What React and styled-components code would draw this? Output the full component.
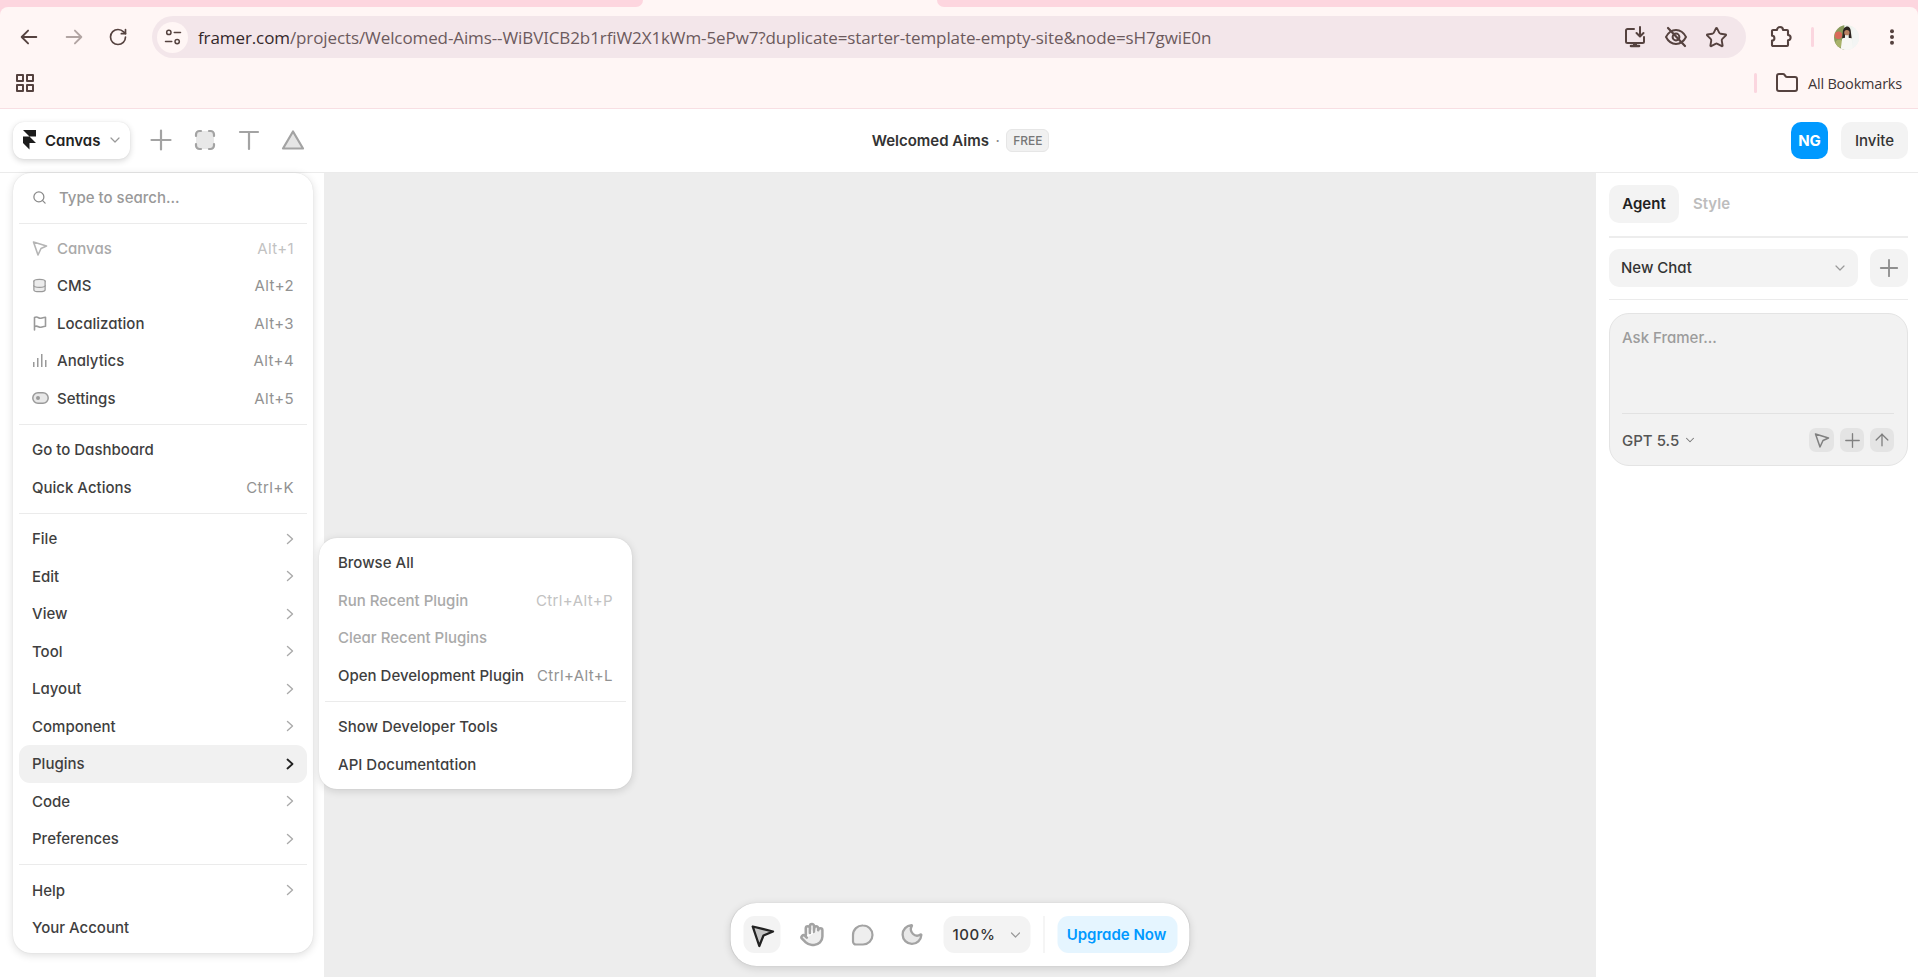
import React from 'react'
import styled, { createGlobalStyle } from 'styled-components'
import { RotateCw, Star, Folder, Database, Hand, Moon, Search, Plus, ChevronDown, ArrowUp } from 'lucide-react'

const GlobalStyle = createGlobalStyle`
  html, body {
    margin: 0;
    padding: 0;
    background: #fff;
    overflow: hidden;
  }
  * { box-sizing: border-box; }
  body {
    font-family: Inter, "Liberation Sans", sans-serif;
    font-feature-settings: "cv11", "ss03";
  }
`

const Page = styled.div`
  width: 1918px;
  height: 977px;
  display: flex;
  flex-direction: column;
  background: #fff;
`

/* browser chrome */
const Browser = styled.div`
  height: 109px;
  flex: none;
  background: #fdd6df;
  display: flex;
  flex-direction: column;
`

const TabStrip = styled.div`
  height: 7px;
  flex: none;
  display: flex;
  justify-content: space-between;
  background: #fff6f5;
`

const TabEdge = styled.div`
  width: ${(p) => p.$width}px;
  background: #fdd6df;
  border-bottom-left-radius: ${(p) => (p.$right ? 10 : 0)}px;
  border-bottom-right-radius: ${(p) => (p.$right ? 0 : 10)}px;
`

const BrowserBody = styled.div`
  flex: 1;
  background: #fff6f5;
  border-radius: 8px 8px 0 0;
  border-bottom: 1px solid #f8dfe3;
`

const NavRow = styled.div`
  height: 51px;
  padding: 9px 0 0 7px;
  display: flex;
  align-items: flex-start;
  color: #55423f;
`

const NavButton = styled.div`
  width: 44.5px;
  height: 42px;
  flex: none;
  display: flex;
  align-items: center;
  justify-content: center;
  opacity: ${(p) => (p.$dim ? 0.45 : 1)};
`

const Omnibox = styled.div`
  width: 1594px;
  height: 42px;
  margin-left: 11.5px;
  border-radius: 21px;
  background: #f3e6ea;
  display: flex;
  align-items: center;
  padding: 0 18px 0 5px;
`

const SiteChip = styled.div`
  width: 31px;
  height: 31px;
  border-radius: 50%;
  background: #fff6f5;
  flex: none;
  display: flex;
  align-items: center;
  justify-content: center;
`

const Url = styled.div`
  margin-left: 10px;
  flex: 1;
  font-family: "Open Sans", sans-serif;
  font-size: 17px;
  letter-spacing: -0.1px;
  color: #6c5a5d;
  white-space: nowrap;
  b {
    font-weight: 400;
    color: #33282a;
  }
`

const OmniIcons = styled.div`
  display: flex;
  align-items: center;
  gap: 17px;
`

const BrowserActions = styled.div`
  display: flex;
  align-items: center;
  height: 42px;
  margin-left: 22px;
`

const PinkBar = styled.div`
  width: 3px;
  height: 20px;
  background: #fbd6df;
  border-radius: 2px;
  flex: none;
`

const Avatar = styled.div`
  width: 25px;
  height: 25px;
  border-radius: 50%;
  overflow: hidden;
  margin-left: 20px;
  flex: none;
`

const BookmarkRow = styled.div`
  height: 50px;
  display: flex;
  align-items: center;
  padding: 0 16px 0 15px;
  color: #55423f;
`

const BookmarkLabel = styled.span`
  font-family: "Open Sans", sans-serif;
  font-size: 14.5px;
  letter-spacing: -0.2px;
  color: #3f3638;
  margin-left: 9px;
  white-space: nowrap;
`

const Spacer = styled.div`
  flex: ${(p) => (p.$w ? 'none' : 1)};
  width: ${(p) => (p.$w ? `${p.$w}px` : 'auto')};
`

/* framer top bar */
const TopBar = styled.div`
  height: 63px;
  flex: none;
  display: grid;
  grid-template-columns: 1fr auto 1fr;
  align-items: center;
  padding: 0 10px 1px 13px;
  background: #fff;
`

const ToolGroup = styled.div`
  display: flex;
  align-items: center;
`

const CanvasButton = styled.div`
  width: 117px;
  height: 37px;
  border-radius: 11px;
  background: #fff;
  box-shadow: 0 2px 6px rgba(0, 0, 0, 0.16), 0 0 1px rgba(0, 0, 0, 0.12);
  display: flex;
  align-items: center;
  padding-left: 10px;
  font-size: 15px;
  font-weight: 600;
  color: #222;
  svg:last-child { margin-left: 7px; color: #999; }
`

const CanvasLabel = styled.span`
  margin-left: 9px;
`

const ToolIcon = styled.div`
  width: 44px;
  height: 37px;
  display: flex;
  align-items: center;
  justify-content: center;
  color: #a3a3a3;
`

const ToolIcons = styled.div`
  display: flex;
  margin-left: 9px;
`

const Title = styled.div`
  display: flex;
  align-items: center;
  font-size: 15px;
  font-weight: 600;
  color: #333;
`

const Dot = styled.span`
  margin: 0 6.5px;
  color: #888;
  font-weight: 400;
`

const FreeBadge = styled.span`
  width: 43px;
  height: 23px;
  border-radius: 6px;
  background: #f1f1f1;
  border: 1px solid #e6e6e6;
  color: #777;
  font-size: 12px;
  font-weight: 500;
  display: flex;
  align-items: center;
  justify-content: center;
`

const TopRight = styled.div`
  display: flex;
  justify-content: flex-end;
  gap: 13px;
`

const Initials = styled.div`
  width: 37px;
  height: 37px;
  border-radius: 10px;
  background: #0099ff;
  color: #fff;
  font-size: 15px;
  font-weight: 700;
  display: flex;
  align-items: center;
  justify-content: center;
`

const InviteButton = styled.div`
  width: 67px;
  height: 37px;
  border-radius: 10px;
  background: #f3f3f3;
  color: #333;
  font-size: 15px;
  font-weight: 500;
  display: flex;
  align-items: center;
  justify-content: center;
`

/* workspace */
const Workspace = styled.div`
  flex: 1;
  min-height: 0;
  display: flex;
  border-top: 1px solid #ebebeb;
`

const LeftPanel = styled.div`
  width: 324px;
  flex: none;
  padding: 0 11px 0 13px;
  position: relative;
`

const Menu = styled.div`
  width: 300px;
  border-radius: 18px;
  background: #fff;
  box-shadow: 0 2px 8px rgba(0, 0, 0, 0.14), 0 0 1px rgba(0, 0, 0, 0.14);
  padding: 0 6px 6.5px;
`

const SearchRow = styled.div`
  height: 49.5px;
  display: flex;
  align-items: center;
  padding-left: 13px;
  color: #8a8a8a;
  font-size: 15px;
  font-weight: 500;
`

const SearchText = styled.span`
  margin-left: 12px;
  color: #999;
`

const Divider = styled.div`
  height: 1px;
  margin: 6.5px 0;
  background: #ebebeb;
`

const SearchDivider = styled(Divider)`
  margin-top: 0;
  margin-bottom: 6px;
`

const Row = styled.div`
  height: 37.5px;
  display: flex;
  align-items: center;
  justify-content: space-between;
  padding: 0 13px;
  border-radius: 11px;
  font-size: 15px;
  font-weight: 500;
  white-space: nowrap;
  color: ${(p) => (p.$disabled ? '#a9a9a9' : '#3f3f3f')};
  background: ${(p) => (p.$active ? '#f1f1f1' : 'transparent')};
`

const RowLabel = styled.span`
  display: flex;
  align-items: center;
`

const RowIcon = styled.span`
  width: 25px;
  display: flex;
  align-items: center;
  color: ${(p) => (p.$disabled ? '#b5b5b5' : '#9a9a9a')};
`

const Shortcut = styled.span`
  color: ${(p) => (p.$disabled ? '#c2c2c2' : '#929292')};
  font-weight: 400;
  font-size: 15px;
  letter-spacing: 0.4px;
`

const Arrow = styled.svg`
  width: 8px;
  height: 12px;
  color: ${(p) => (p.$active ? '#222' : '#aaa')};
`

const SubMenu = styled.div`
  position: absolute;
  left: 319px;
  top: 365px;
  width: 313px;
  z-index: 2;
  padding: 6px;
  border-radius: 18px;
  background: #fff;
  box-shadow: 0 2px 8px rgba(0, 0, 0, 0.14), 0 0 1px rgba(0, 0, 0, 0.14);
`

const Canvas = styled.div`
  flex: 1;
  background: #ededed;
  position: relative;
`

const BottomBar = styled.div`
  position: absolute;
  left: 50%;
  bottom: 11px;
  transform: translateX(-50%);
  height: 63px;
  display: flex;
  align-items: center;
  gap: 13px;
  padding: 0 12px 0 13px;
  border-radius: 26px;
  background: #fff;
  box-shadow: 0 2px 8px rgba(0, 0, 0, 0.14), 0 0 1px rgba(0, 0, 0, 0.14);
`

const BarButton = styled.div`
  width: 37px;
  height: 37px;
  border-radius: 11px;
  display: flex;
  align-items: center;
  justify-content: center;
  color: #a3a3a3;
  background: ${(p) => (p.$active ? '#f3f3f3' : 'transparent')};
`

const ZoomSelect = styled.div`
  width: 87px;
  height: 37px;
  border-radius: 11px;
  background: #f3f3f3;
  display: flex;
  align-items: center;
  justify-content: space-between;
  padding: 0 7px 0 9px;
  font-size: 15px;
  font-weight: 500;
  letter-spacing: 0.6px;
  color: #333;
  svg { color: #999; }
`

const BarRule = styled.div`
  width: 1px;
  height: 37px;
  background: #ececec;
`

const UpgradeButton = styled.div`
  width: 120px;
  height: 37px;
  padding-right: 2px;
  border-radius: 11px;
  background: #e5f5ff;
  color: #0099ff;
  font-size: 15px;
  font-weight: 600;
  display: flex;
  align-items: center;
  justify-content: center;
`

/* right panel */
const RightPanel = styled.div`
  width: 322px;
  flex: none;
  padding: 12px 10px 0 13px;
  background: #fff;
`

const Tabs = styled.div`
  display: flex;
  align-items: center;
  gap: 14px;
  padding-bottom: 13px;
  border-bottom: 2px solid #ededed;
`

const Tab = styled.div`
  height: 38px;
  width: ${(p) => (p.$active ? '70px' : 'auto')};
  padding-bottom: 1px;
  border-radius: 10px;
  display: flex;
  align-items: center;
  justify-content: center;
  font-size: 15px;
  font-weight: 600;
  background: ${(p) => (p.$active ? '#f3f3f3' : 'transparent')};
  color: ${(p) => (p.$active ? '#222' : '#bdbdbd')};
`

const ChatRow = styled.div`
  display: flex;
  gap: 12px;
  margin-top: 11px;
  padding-bottom: 12px;
  border-bottom: 1px solid #ebebeb;
`

const ChatSelect = styled.div`
  flex: 1;
  height: 38px;
  border-radius: 10px;
  background: #f3f3f3;
  display: flex;
  align-items: center;
  justify-content: space-between;
  padding: 0 10px 1px 12px;
  font-size: 15px;
  font-weight: 500;
  color: #333;
  svg { color: #999; }
`

const ChatAdd = styled.div`
  width: 38px;
  height: 38px;
  border-radius: 10px;
  background: #f3f3f3;
  display: flex;
  align-items: center;
  justify-content: center;
  color: #8f8f8f;
`

const Composer = styled.div`
  height: 153px;
  margin-top: 13px;
  border-radius: 20px;
  background: #f2f2f2;
  border: 1px solid #e4e4e4;
  padding: 0 13px 0 12px;
  display: flex;
  flex-direction: column;
`

const Prompt = styled.div`
  height: 100px;
  padding-top: 14px;
  border-bottom: 1px solid #e2e2e2;
  font-size: 15px;
  font-weight: 500;
  color: #9c9c9c;
`

const ComposerFoot = styled.div`
  flex: 1;
  display: flex;
  align-items: center;
  justify-content: space-between;
  padding-top: 1px;
`

const ModelPicker = styled.div`
  display: flex;
  align-items: center;
  gap: 4px;
  font-size: 15px;
  font-weight: 500;
  color: #555;
  svg { color: #777; }
`

const MiniButtons = styled.div`
  display: flex;
  gap: 6px;
`

const MiniButton = styled.div`
  width: ${(p) => p.$w || 24}px;
  height: 24px;
  border-radius: 7px;
  background: #e4e4e4;
  display: flex;
  align-items: center;
  justify-content: center;
  color: #808080;
`

const Icon = ({ size = 24, view = '0 0 24 24', sw = 2, children, fill = 'none' }) => (
  <svg
    width={size}
    height={size}
    viewBox={view}
    fill={fill}
    stroke="currentColor"
    strokeWidth={sw}
    strokeLinecap="round"
    strokeLinejoin="round"
  >
    {children}
  </svg>
)

const ArrowBack = ({ flip }) => (
  <Icon size={22}>
    <path d={flip ? 'M4 12h16M13 5l7 7-7 7' : 'M20 12H4M11 5l-7 7 7 7'} />
  </Icon>
)

const TuneIcon = () => (
  <Icon size={20} sw={1.8}>
    <circle cx="7" cy="6.5" r="2.6" />
    <path d="M13.5 6.5H21M3 17.5h7.5" />
    <circle cx="17" cy="17.5" r="2.6" />
  </Icon>
)

const InstallIcon = () => (
  <Icon size={24} sw={2}>
    <path d="M11 4H4.5A1.5 1.5 0 0 0 3 5.5v11A1.5 1.5 0 0 0 4.5 18h15a1.5 1.5 0 0 0 1.5-1.5V12" />
    <path d="M17 2v9M13.5 8l3.5 3.5L20.5 8" />
    <path d="M8 21h8" strokeWidth="2.6" />
    <path d="M10 18h4v3h-4z" fill="currentColor" stroke="none" />
  </Icon>
)

const EyeOffIcon = () => (
  <Icon size={24} sw={2}>
    <path d="M2 12c2.4-4.6 5.8-7 10-7s7.6 2.4 10 7c-2.4 4.6-5.8 7-10 7s-7.6-2.4-10-7z" />
    <circle cx="12" cy="12" r="3.4" />
    <path d="M4 3l17 18" strokeWidth="2.2" />
  </Icon>
)

const PuzzleIcon = () => (
  <Icon size={24} sw={2.1}>
    <path d="M9 5a3 3 0 0 1 6 0h4a1 1 0 0 1 1 1v4a2.6 2.6 0 0 1 0 5.2V20a1 1 0 0 1-1 1H5a1 1 0 0 1-1-1v-4.4a2.4 2.4 0 0 0 0-4.8V6a1 1 0 0 1 1-1z" />
  </Icon>
)

const DotsIcon = () => (
  <svg width="6" height="16" viewBox="0 0 6 16" fill="currentColor">
    <circle cx="3" cy="2.2" r="2" />
    <circle cx="3" cy="8" r="2" />
    <circle cx="3" cy="13.8" r="2" />
  </svg>
)

const AppsIcon = () => (
  <Icon size={20} sw={2} view="0 0 20 20">
    <rect x="2" y="2" width="6" height="6" />
    <rect x="12" y="2" width="6" height="6" />
    <rect x="2" y="12" width="6" height="6" />
    <rect x="12" y="12" width="6" height="6" />
  </Icon>
)

const AvatarPhoto = () => (
  <svg width="25" height="25" viewBox="0 0 34 34">
    <rect width="34" height="34" fill="#eef2ec" />
    <rect width="14" height="34" fill="#8a9a5c" />
    <circle cx="6" cy="14" r="5" fill="#d9695a" />
    <circle cx="7" cy="25" r="5" fill="#a8b26a" />
    <rect x="25" width="9" height="34" fill="#f3f5f4" />
    <path d="M12 10c0-5 3-8 6-8s5 3 5 8l1 8h-4v-6h-5v6h-4z" fill="#2b2320" />
    <circle cx="17.5" cy="10.5" r="3.6" fill="#b98263" />
    <path d="M9 34l2-15c2-2 10-2 13 0l2 15z" fill="#f7f7f5" />
  </svg>
)

const FramerLogo = () => (
  <svg width="13" height="19.5" viewBox="4 0 16 24" fill="#1c1c1c">
    <path d="M4 0h16v8h-8zM4 8h8l8 8H4zM4 16h8v8z" />
  </svg>
)

const PlusIcon = () => (
  <Icon size={22} sw={2.2} view="0 0 22 22">
    <path d="M11 1.5v19M1.5 11h19" />
  </Icon>
)

const FrameIcon = () => (
  <Icon size={22} sw={2.2} view="0 0 22 22">
    <rect x="2" y="2" width="18" height="18" rx="4" fill="#e8e8e8" stroke="none" />
    <path d="M2 7V5.5A3.5 3.5 0 0 1 5.5 2H7M15 2h1.5A3.5 3.5 0 0 1 20 5.5V7M20 15v1.500a3.5 3.5 0 0 1-3.5 3.5H15M7 20H5.5A3.5 3.5 0 0 1 2 16.500V15" />
  </Icon>
)

const TextToolIcon = () => (
  <Icon size={22} sw={2.2} view="0 0 22 22">
    <path d="M2 3h18M11 3v17" />
  </Icon>
)

const TriangleIcon = () => (
  <Icon size={24} sw={2.2}>
    <path d="M12 3.5L22 20.5H2z" fill="#e5e5e5" />
  </Icon>
)

const PointerOutline = ({ size = 16, sw = 1.6 }) => (
  <Icon size={size} sw={sw} view="0 0 16 16">
    <path d="M1.5 2l13 4-5.500 2.500-3 6.500z" />
  </Icon>
)

const FlagIcon = () => (
  <Icon size={16} sw={1.6} view="0 0 16 16">
    <path d="M2.5 15V2.5c3-1.5 4 .8 5.5.8s3-1 5.5-1v9c-2.5 0-4 1-5.5 1s-2.500-2-5.500-.8" />
  </Icon>
)

const BarsIcon = () => (
  <svg width="15" height="15" viewBox="0 0 15 15" fill="currentColor">
    <rect x="1" y="9" width="1.5" height="5" />
    <rect x="5" y="5" width="1.5" height="9" />
    <rect x="9" y="1" width="1.5" height="13" />
    <rect x="13" y="7" width="1.5" height="7" />
  </svg>
)

const ToggleIcon = () => (
  <svg width="17" height="12" viewBox="0 0 17 12">
    <rect x="0.8" y="0.8" width="15.4" height="10.4" rx="5.2" fill="#e8e8e8" stroke="currentColor" strokeWidth="1.5" />
    <circle cx="6" cy="6" r="2" fill="currentColor" />
  </svg>
)

const RightArrow = ({ active }) => (
  <Arrow $active={active} viewBox="0 0 8 12" fill="none" stroke="currentColor" strokeWidth={active ? 1.8 : 1.4} strokeLinecap="round" strokeLinejoin="round">
    <path d="M1.5 1.5L6.5 6 1.5 10.5" />
  </Arrow>
)

const CursorIcon = () => (
  <svg width="26" height="26" viewBox="0 0 26 26" fill="#c6c6c6" stroke="#222" strokeWidth="2.3" strokeLinejoin="round">
    <path d="M3.2 4.5L23.500 9.5 14 13.5 9.800 24z" />
  </svg>
)

const BubbleIcon = () => (
  <Icon size={26} sw={2.2} view="0 0 26 26">
    <path d="M13.5 3.5a9.5 9.5 0 1 1 0 19H6.5a3 3 0 0 1-3-3v-6.5a9.5 9.5 0 0 1 10-9.5z" fill="#eeeeee" />
  </Icon>
)

const topItems = [
  { label: 'Canvas', keys: 'Alt+1', icon: <PointerOutline />, disabled: true },
  { label: 'CMS', keys: 'Alt+2', icon: <Database size={15} strokeWidth={2} fill="#ececec" /> },
  { label: 'Localization', keys: 'Alt+3', icon: <FlagIcon /> },
  { label: 'Analytics', keys: 'Alt+4', icon: <BarsIcon /> },
  { label: 'Settings', keys: 'Alt+5', icon: <ToggleIcon /> },
]

const submenuItems = ['File', 'Edit', 'View', 'Tool', 'Layout', 'Component', 'Plugins', 'Code', 'Preferences']

const App = () => (
  <Page>
    <GlobalStyle />
    <Browser>
      <TabStrip>
        <TabEdge $width={643} />
        <TabEdge $width={981} $right />
      </TabStrip>
      <BrowserBody>
        <NavRow>
          <NavButton><ArrowBack /></NavButton>
          <NavButton $dim><ArrowBack flip /></NavButton>
          <NavButton><RotateCw size={20} strokeWidth={2} /></NavButton>
          <Omnibox>
            <SiteChip><TuneIcon /></SiteChip>
            <Url>
              <b>framer.com</b>/projects/Welcomed-Aims--WiBVICB2b1rfiW2X1kWm-5ePw7?duplicate=starter-template-empty-site&amp;node=sH7gwiE0n
            </Url>
            <OmniIcons>
              <InstallIcon />
              <EyeOffIcon />
              <Star size={23} strokeWidth={2} />
            </OmniIcons>
          </Omnibox>
          <BrowserActions>
            <PuzzleIcon />
            <Spacer $w={18.5} />
            <PinkBar />
            <Avatar><AvatarPhoto /></Avatar>
            <Spacer $w={30.5} />
            <DotsIcon />
          </BrowserActions>
        </NavRow>
        <BookmarkRow>
          <AppsIcon />
          <Spacer />
          <PinkBar />
          <Spacer $w={17.5} />
          <Folder size={24} strokeWidth={2} />
          <BookmarkLabel>All Bookmarks</BookmarkLabel>
        </BookmarkRow>
      </BrowserBody>
    </Browser>

    <TopBar>
      <ToolGroup>
        <CanvasButton>
          <FramerLogo />
          <CanvasLabel>Canvas</CanvasLabel>
          <ChevronDown size={16} strokeWidth={1.8} />
        </CanvasButton>
        <ToolIcons>
          <ToolIcon><PlusIcon /></ToolIcon>
          <ToolIcon><FrameIcon /></ToolIcon>
          <ToolIcon><TextToolIcon /></ToolIcon>
          <ToolIcon><TriangleIcon /></ToolIcon>
        </ToolIcons>
      </ToolGroup>
      <Title>
        Welcomed Aims<Dot>·</Dot><FreeBadge>FREE</FreeBadge>
      </Title>
      <TopRight>
        <Initials>NG</Initials>
        <InviteButton>Invite</InviteButton>
      </TopRight>
    </TopBar>

    <Workspace>
      <LeftPanel>
        <Menu>
          <SearchRow>
            <Search size={15} strokeWidth={2} />
            <SearchText>Type to search...</SearchText>
          </SearchRow>
          <SearchDivider />
          {topItems.map((item) => (
            <Row key={item.label} $disabled={item.disabled}>
              <RowLabel>
                <RowIcon $disabled={item.disabled}>{item.icon}</RowIcon>
                {item.label}
              </RowLabel>
              <Shortcut $disabled={item.disabled}>{item.keys}</Shortcut>
            </Row>
          ))}
          <Divider />
          <Row>Go to Dashboard</Row>
          <Row>Quick Actions<Shortcut>Ctrl+K</Shortcut></Row>
          <Divider />
          {submenuItems.map((label) => (
            <Row key={label} $active={label === 'Plugins'}>
              {label}
              <RightArrow active={label === 'Plugins'} />
            </Row>
          ))}
          <Divider />
          <Row>Help<RightArrow /></Row>
          <Row>Your Account</Row>
        </Menu>
        <SubMenu>
          <Row>Browse All</Row>
          <Row $disabled>Run Recent Plugin<Shortcut $disabled>Ctrl+Alt+P</Shortcut></Row>
          <Row $disabled>Clear Recent Plugins</Row>
          <Row>Open Development Plugin<Shortcut>Ctrl+Alt+L</Shortcut></Row>
          <Divider />
          <Row>Show Developer Tools</Row>
          <Row>API Documentation</Row>
        </SubMenu>
      </LeftPanel>

      <Canvas>
        <BottomBar>
          <BarButton $active><CursorIcon /></BarButton>
          <BarButton><Hand size={25} strokeWidth={2.4} fill="#eeeeee" /></BarButton>
          <BarButton><BubbleIcon /></BarButton>
          <BarButton><Moon size={25} strokeWidth={2.2} fill="#e8e8e8" /></BarButton>
          <ZoomSelect>
            100%
            <ChevronDown size={16} strokeWidth={1.8} />
          </ZoomSelect>
          <BarRule />
          <UpgradeButton>Upgrade Now</UpgradeButton>
        </BottomBar>
      </Canvas>

      <RightPanel>
        <Tabs>
          <Tab $active>Agent</Tab>
          <Tab>Style</Tab>
        </Tabs>
        <ChatRow>
          <ChatSelect>
            New Chat
            <ChevronDown size={16} strokeWidth={1.8} />
          </ChatSelect>
          <ChatAdd><Plus size={28} strokeWidth={1.6} /></ChatAdd>
        </ChatRow>
        <Composer>
          <Prompt>Ask Framer...</Prompt>
          <ComposerFoot>
            <ModelPicker>GPT 5.5<ChevronDown size={14} strokeWidth={1.8} /></ModelPicker>
            <MiniButtons>
              <MiniButton $w={25}><PointerOutline size={16} sw={1.5} /></MiniButton>
              <MiniButton><Plus size={23} strokeWidth={1.4} /></MiniButton>
              <MiniButton><ArrowUp size={20} strokeWidth={1.6} /></MiniButton>
            </MiniButtons>
          </ComposerFoot>
        </Composer>
      </RightPanel>
    </Workspace>
  </Page>
)

export default App
